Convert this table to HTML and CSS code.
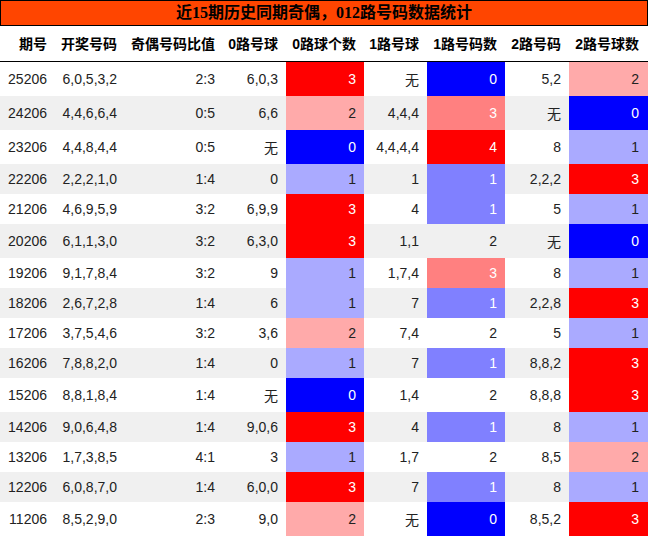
FILE: index.html
```html
<!DOCTYPE html>
<html lang="zh">
<head>
<meta charset="utf-8">
<link rel="stylesheet" href="styles.css">
</head>
<body>
<div class="title">近15期历史同期奇偶，012路号码数据统计</div>
<table class="stats">
<colgroup>
<col class="w1"><col class="w2"><col class="w3"><col class="w4"><col class="w5"><col class="w6"><col class="w7"><col class="w8"><col class="w9">
</colgroup>
<thead>
<tr><th>期号</th><th>开奖号码</th><th>奇偶号码比值</th><th>0路号球</th><th>0路球个数</th><th>1路号球</th><th>1路号码数</th><th>2路号码</th><th>2路号球数</th></tr>
</thead>
<tbody>
<tr><td>25206</td><td>6,0,5,3,2</td><td>2:3</td><td>6,0,3</td><td class="red">3</td><td>无</td><td class="blue">0</td><td>5,2</td><td class="pink">2</td></tr>
<tr><td>24206</td><td>4,4,6,6,4</td><td>0:5</td><td>6,6</td><td class="pink">2</td><td>4,4,4</td><td class="salmon">3</td><td>无</td><td class="blue">0</td></tr>
<tr><td>23206</td><td>4,4,8,4,4</td><td>0:5</td><td>无</td><td class="blue">0</td><td>4,4,4,4</td><td class="red">4</td><td>8</td><td class="lb">1</td></tr>
<tr><td>22206</td><td>2,2,2,1,0</td><td>1:4</td><td>0</td><td class="lb">1</td><td>1</td><td class="mb">1</td><td>2,2,2</td><td class="red">3</td></tr>
<tr><td>21206</td><td>4,6,9,5,9</td><td>3:2</td><td>6,9,9</td><td class="red">3</td><td>4</td><td class="mb">1</td><td>5</td><td class="lb">1</td></tr>
<tr><td>20206</td><td>6,1,1,3,0</td><td>3:2</td><td>6,3,0</td><td class="red">3</td><td>1,1</td><td>2</td><td>无</td><td class="blue">0</td></tr>
<tr><td>19206</td><td>9,1,7,8,4</td><td>3:2</td><td>9</td><td class="lb">1</td><td>1,7,4</td><td class="salmon">3</td><td>8</td><td class="lb">1</td></tr>
<tr><td>18206</td><td>2,6,7,2,8</td><td>1:4</td><td>6</td><td class="lb">1</td><td>7</td><td class="mb">1</td><td>2,2,8</td><td class="red">3</td></tr>
<tr><td>17206</td><td>3,7,5,4,6</td><td>3:2</td><td>3,6</td><td class="pink">2</td><td>7,4</td><td>2</td><td>5</td><td class="lb">1</td></tr>
<tr><td>16206</td><td>7,8,8,2,0</td><td>1:4</td><td>0</td><td class="lb">1</td><td>7</td><td class="mb">1</td><td>8,8,2</td><td class="red">3</td></tr>
<tr><td>15206</td><td>8,8,1,8,4</td><td>1:4</td><td>无</td><td class="blue">0</td><td>1,4</td><td>2</td><td>8,8,8</td><td class="red">3</td></tr>
<tr><td>14206</td><td>9,0,6,4,8</td><td>1:4</td><td>9,0,6</td><td class="red">3</td><td>4</td><td class="mb">1</td><td>8</td><td class="lb">1</td></tr>
<tr><td>13206</td><td>1,7,3,8,5</td><td>4:1</td><td>3</td><td class="lb">1</td><td>1,7</td><td>2</td><td>8,5</td><td class="pink">2</td></tr>
<tr><td>12206</td><td>6,0,8,7,0</td><td>1:4</td><td>6,0,0</td><td class="red">3</td><td>7</td><td class="mb">1</td><td>8</td><td class="lb">1</td></tr>
<tr><td>11206</td><td>8,5,2,9,0</td><td>2:3</td><td>9,0</td><td class="pink">2</td><td>无</td><td class="blue">0</td><td>8,5,2</td><td class="red">3</td></tr>
</tbody>
</table>
</body>
</html>
```
FILE: styles.css
```css
html, body {
  margin: 0;
  padding: 0;
  background: #ffffff;
}
body {
  width: 648px;
  font-family: "Liberation Sans", "Noto Sans CJK SC", sans-serif;
}
.title {
  box-sizing: border-box;
  height: 26px;
  border: 1px solid #000;
  background: #ff4500;
  color: #000;
  font-family: "Liberation Serif", "Noto Sans CJK SC", serif;
  font-weight: bold;
  font-size: 16px;
  line-height: 24px;
  text-align: center;
  white-space: nowrap;
}
.stats {
  width: 648px;
  table-layout: fixed;
  border-collapse: separate;
  border-spacing: 0;
  font-size: 14px;
}
.w1 { width: 55px; }
.w2 { width: 70px; }
.w3 { width: 98px; }
.w4 { width: 63px; }
.w5 { width: 78px; }
.w6 { width: 63px; }
.w7 { width: 78px; }
.w8 { width: 64px; }
.w9 { width: 79px; }
.stats th {
  font-weight: bold;
  color: #000;
  text-align: right;
  padding: 7px 8px 8px 0;
  border-bottom: 1px solid #000;
  white-space: nowrap;
  line-height: normal;
  background: #fff;
}
.stats th:last-child { padding-right: 9px; }
.stats td {
  text-align: right;
  padding: 7px 8px 7px 0;
  color: #222;
  white-space: nowrap;
  line-height: normal;
}
.stats td:last-child { padding-right: 9px; }
.stats tbody tr:nth-child(even) td { background: #f0f0f0; }
.stats tbody tr td.red { background: #ff0000; color: #fff; }
.stats tbody tr td.blue { background: #0000ff; color: #fff; }
.stats tbody tr td.pink { background: #ffaaaa; color: #222; }
.stats tbody tr td.lb { background: #aaaaff; color: #222; }
.stats tbody tr td.mb { background: #8080ff; color: #fff; }
.stats tbody tr td.salmon { background: #ff8080; color: #fff; }
```
